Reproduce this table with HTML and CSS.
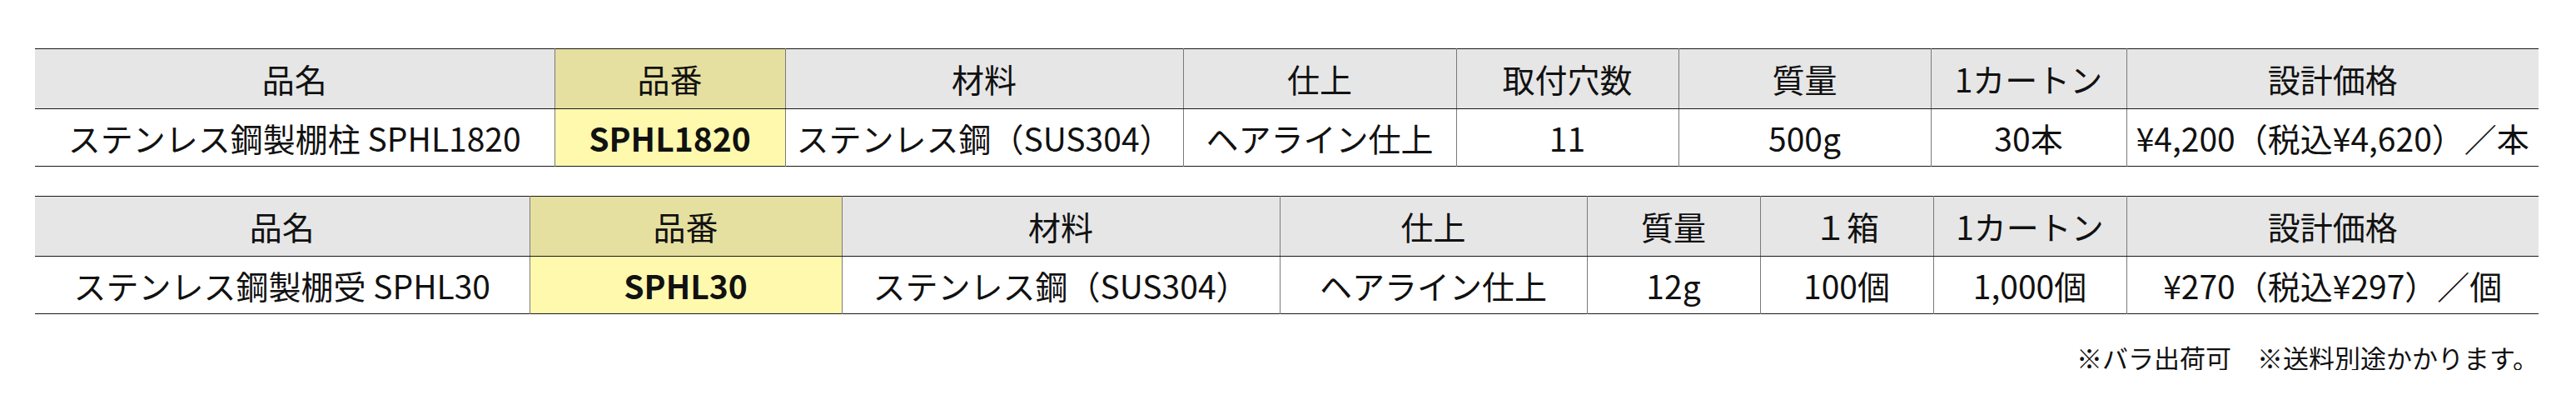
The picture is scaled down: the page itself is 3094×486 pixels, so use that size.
FILE: index.html
```html
<!DOCTYPE html>
<html lang="ja">
<head>
<meta charset="utf-8">
<title>SPHL</title>
<link rel="stylesheet" href="styles.css">
</head>
<body>
<div class="page">
  <table class="spec t1">
    <colgroup>
      <col class="c1"><col class="c2"><col class="c3"><col class="c4"><col class="c5"><col class="c6"><col class="c7"><col class="c8">
    </colgroup>
    <thead>
      <tr>
        <th>品名</th>
        <th class="code">品番</th>
        <th>材料</th>
        <th>仕上</th>
        <th>取付穴数</th>
        <th>質量</th>
        <th>1カートン</th>
        <th>設計価格</th>
      </tr>
    </thead>
    <tbody>
      <tr>
        <td>ステンレス鋼製棚柱 SPHL1820</td>
        <td class="code">SPHL1820</td>
        <td>ステンレス鋼（SUS304）</td>
        <td>ヘアライン仕上</td>
        <td>11</td>
        <td>500g</td>
        <td>30本</td>
        <td>¥4,200（税込¥4,620）／本</td>
      </tr>
    </tbody>
  </table>

  <table class="spec t2">
    <colgroup>
      <col class="c1"><col class="c2"><col class="c3"><col class="c4"><col class="c5"><col class="c6"><col class="c7"><col class="c8">
    </colgroup>
    <thead>
      <tr>
        <th>品名</th>
        <th class="code">品番</th>
        <th>材料</th>
        <th>仕上</th>
        <th>質量</th>
        <th>１箱</th>
        <th>1カートン</th>
        <th>設計価格</th>
      </tr>
    </thead>
    <tbody>
      <tr>
        <td>ステンレス鋼製棚受 SPHL30</td>
        <td class="code">SPHL30</td>
        <td>ステンレス鋼（SUS304）</td>
        <td>ヘアライン仕上</td>
        <td>12g</td>
        <td>100個</td>
        <td>1,000個</td>
        <td>¥270（税込¥297）／個</td>
      </tr>
    </tbody>
  </table>

  <p class="note">※バラ出荷可　※送料別途かかります。</p>
</div>
</body>
</html>
```

FILE: styles.css
```css
html, body {
  margin: 0;
  padding: 0;
  background: #ffffff;
}

body {
  font-family: "Noto Sans CJK JP", "Noto Sans", sans-serif;
  color: #111111;
}

.page {
  width: 3007px;
  padding: 58px 0 0 42px;
  display: flex;
  flex-direction: column;
}

.spec {
  width: 3007px;
  border-collapse: collapse;
  table-layout: fixed;
  border-top: 1px solid #1a1a1a;
  border-bottom: 1px solid #1a1a1a;
}

.spec + .spec {
  margin-top: 35px;
}

.spec th,
.spec td {
  font-size: 39px;
  line-height: 1;
  font-weight: 400;
  text-align: center;
  vertical-align: middle;
  padding: 0;
  white-space: nowrap;
  border-left: 1px solid #7a7a7a;
  border-right: 1px solid #7a7a7a;
}

.spec th:first-child,
.spec td:first-child {
  border-left: none;
}

.spec th:last-child,
.spec td:last-child {
  border-right: none;
}

.spec thead tr {
  height: 72px;
}

.spec tbody tr {
  height: 69px;
}

.spec th {
  background: #e6e6e6;
  border-bottom: 1px solid #1a1a1a;
}

.spec th.code {
  background: #e6e0a0;
}

.spec td.code {
  background: #fff9ad;
  font-weight: 700;
}

.t1 .c1 { width: 624px; }
.t1 .c2 { width: 277px; }
.t1 .c3 { width: 478px; }
.t1 .c4 { width: 328px; }
.t1 .c5 { width: 267px; }
.t1 .c6 { width: 303px; }
.t1 .c7 { width: 235px; }
.t1 .c8 { width: 495px; }

.t2 .c1 { width: 594px; }
.t2 .c2 { width: 375px; }
.t2 .c3 { width: 526px; }
.t2 .c4 { width: 369px; }
.t2 .c5 { width: 208px; }
.t2 .c6 { width: 208px; }
.t2 .c7 { width: 232px; }
.t2 .c8 { width: 495px; }

.note {
  margin: 36px 0 0 0;
  font-size: 31px;
  line-height: 1;
  text-align: right;
  color: #111111;
}
```
